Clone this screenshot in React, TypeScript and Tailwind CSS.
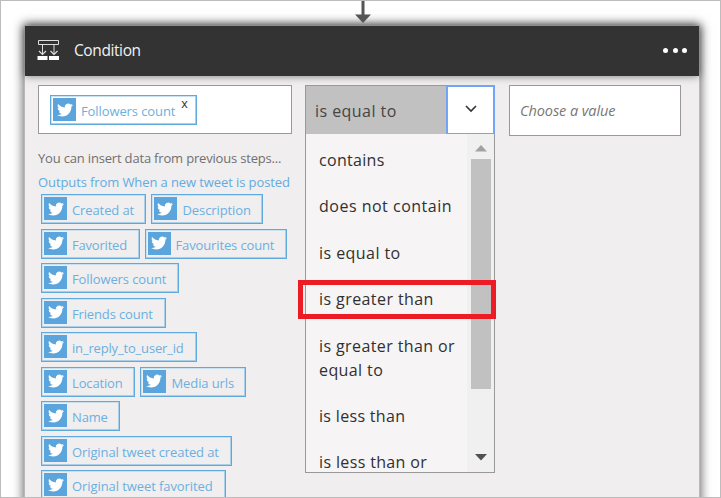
import type { ReactNode } from "react";

const BIRD =
  "M23.953 4.57a10 10 0 01-2.825.775 4.958 4.958 0 002.163-2.723c-.951.555-2.005.959-3.127 1.184a4.92 4.92 0 00-8.384 4.482C7.69 8.095 4.067 6.13 1.64 3.162a4.822 4.822 0 00-.666 2.475c0 1.71.87 3.213 2.188 4.096a4.904 4.904 0 01-2.228-.616v.06a4.923 4.923 0 003.946 4.827 4.996 4.996 0 01-2.212.085 4.936 4.936 0 004.604 3.417 9.867 9.867 0 01-6.102 2.105c-.39 0-.779-.023-1.17-.067a13.995 13.995 0 007.557 2.209c9.053 0 13.998-7.496 13.998-13.985 0-.21 0-.42-.015-.63A9.935 9.935 0 0024 4.59z";

function Chip({ width, label, track, children }: { width: string; label: string; track: string; children?: ReactNode }) {
  return (
    <div className={`flex h-[30px] shrink-0 items-start border border-[#5fa9dc] pl-[2px] pt-[2px] shadow-[inset_-1px_-1px_0_#a9d0eb,inset_1px_1px_0_#c9e1f1] ${width}`}>
      <span className="flex h-[23px] w-[23px] shrink-0 items-center justify-center bg-[#5ca5dc]">
        <svg viewBox="0 0 24 24" className="h-[16px] w-[16px]" fill="#fff"><path d={BIRD} /></svg>
      </span>
      <span className={`ml-[5px] mt-[3px] whitespace-nowrap text-[13px] leading-[20px] text-[#6cb0e1] ${track}`}>{label}</span>
      {children}
    </div>
  );
}

const rows = [
  [
    { label: "Created at", width: "w-[105px]", track: "tracking-[-0.1px]" },
    { label: "Description", width: "w-[112px]", track: "tracking-[-0.1px] pl-px" },
  ],
  [
    { label: "Favorited", width: "w-[99px]", track: "tracking-[-0.2px]" },
    { label: "Favourites count", width: "w-[142px]", track: "tracking-[-0.13px]" },
  ],
  [{ label: "Followers count", width: "w-[138px]", track: "tracking-[-0.1px]" }],
  [{ label: "Friends count", width: "w-[125px]", track: "tracking-[-0.15px]" }],
  [{ label: "in_reply_to_user_id", width: "w-[156px]", track: "tracking-[-0.17px]" }],
  [
    { label: "Location", width: "w-[94px]", track: "tracking-[-0.15px]" },
    { label: "Media urls", width: "w-[106px]", track: "tracking-[-0.1px] pl-px" },
  ],
  [{ label: "Name", width: "w-[79px]", track: "tracking-[-0.15px]" }],
  [{ label: "Original tweet created at", width: "w-[191px]", track: "tracking-[-0.1px]" }],
  [{ label: "Original tweet favorited", width: "w-[185px]", track: "tracking-[-0.08px]" }],
];

const options = [
  { label: "contains", track: "tracking-[0.3px]" },
  { label: "does not contain", track: "tracking-[0.5px]" },
  { label: "is equal to", track: "tracking-[0.44px]" },
  { label: "is greater than", track: "tracking-[0.42px]" },
  { label: "is greater than or equal to", track: "tracking-[0.4px]" },
  { label: "is less than", track: "tracking-[0.32px]" },
  { label: "is less than or", track: "tracking-[0.36px]" },
];

export default function App() {
  return (
    <div className="relative h-[498px] w-[721px] overflow-hidden border border-[#bdbdbd] bg-white pl-[23px] pt-[24px] font-['Open_Sans','Noto_Sans',sans-serif]">
      <svg className="absolute left-[352.500px] top-0" width="18" height="23" viewBox="0 0 18 23">
        <path d="M7.500 0h3v13.500H17L9 22 1 13.500h6.500z" fill="#555" />
      </svg>
      <main className="h-[500px] w-[676px] border-x border-t border-[#b8b8b8] bg-[#f0eeef] shadow-[0_0_10px_1px_rgba(0,0,0,0.6)]">
        <header className="flex h-[50px] items-center bg-[#333] pl-[12px] pr-[11px] shadow-[0_0_8px_rgba(0,0,0,0.5)]">
          <svg width="24" height="24" viewBox="0 0 24 24" fill="none" stroke="#ddd">
            <path d="M1.500 1.500h20v4h-20zM5.500 5.500v10M17 5.500v10" />
            <path d="M2 12l3.500 3.500L9 12M13.500 12l3.500 3.500L20.500 12" strokeWidth="1.200" />
            <path d="M.5 17h10v4H.5zM12 17h10v4H12z" fill="#fff" stroke="none" />
          </svg>
          <h1 className="-mt-[2px] ml-[13px] text-[15.500px] leading-[22px] tracking-[-0.4px] text-[#f1f1f1]">Condition</h1>
          <div className="-mt-[2px] ml-auto flex gap-[4.500px] pr-[1px]">
            <i className="h-[5px] w-[5px] rounded-full bg-white" />
            <i className="h-[5px] w-[5px] rounded-full bg-white" />
            <i className="h-[5px] w-[5px] rounded-full bg-white" />
          </div>
        </header>
        <div className="flex items-start pl-[13px] pt-[9px]">
          <section className="w-[254px] shrink-0">
            <div className="h-[49px] border border-[#999] bg-white pl-[11px] pt-[9px]">
              <Chip label="Followers count" width="w-[147px]" track="tracking-[-0.1px]">
                <span className="ml-[6px] mt-[-1px] text-[12.500px] leading-[13px] text-[#333]">x</span>
              </Chip>
            </div>
            <p className="mt-[14px] whitespace-nowrap text-[13px] leading-[20px] tracking-[-0.18px] text-[#707070]">You can insert data from previous steps...</p>
            <p className="mt-[4px] whitespace-nowrap text-[13px] leading-[20px] tracking-[-0.1px] text-[#64abdf]">Outputs from When a new tweet is posted</p>
            <div className="mt-[2px] flex flex-col gap-[4.500px] pl-[3px]">
              {rows.map((row, i) => (
                <div key={i} className="flex gap-[4.500px]">
                  {row.map((c) => <Chip key={c.label} {...c} />)}
                </div>
              ))}
            </div>
          </section>
          <section className="ml-[13px] flex h-[388px] w-[190px] shrink-0 flex-col border border-[#999]">
            <div className="flex h-[48px] shrink-0 bg-[#c1c1c1] pl-[9px]">
              <span className="mt-[13px] whitespace-nowrap text-[16px] leading-[24px] tracking-[0.45px] text-[#454545]">is equal to</span>
              <button className="-mr-px -mt-px ml-auto flex h-[50px] w-[49px] items-center justify-center rounded-[2px] border-2 border-[#72a5f8] bg-white">
                <svg width="14" height="10" viewBox="0 0 14 10" className="-mt-[2px]" fill="none" stroke="#333" strokeWidth="1.600"><path d="M2 2l5 5 5-5" /></svg>
              </button>
            </div>
            <div className="flex min-h-0 flex-1 bg-[#f6f4f5]">
              <ul className="flex-1 overflow-hidden pl-[13px] pt-[14px]">
                {options.map((o) => (
                  <li key={o.label} className={`mb-[22.400px] w-[147px] text-[16px] leading-[24px] text-[#303030] ${o.track}`}>{o.label}</li>
                ))}
              </ul>
              <div className="flex w-[27px] shrink-0 flex-col items-center bg-[#f0f0f0]">
                <svg width="12" height="7" viewBox="0 0 12 7" className="mt-[11px] shrink-0"><path d="M6 0l6 6.500H0z" fill="#a2a2a2" /></svg>
                <div className="mt-[7px] h-[230px] w-[20px] shrink-0 bg-[#c1c1c1]" />
                <svg width="12" height="7" viewBox="0 0 12 7" className="mb-[11px] mt-auto shrink-0"><path d="M6 6.500L0 0h12z" fill="#505050" /></svg>
              </div>
            </div>
          </section>
          <div className="ml-[14px] h-[51px] w-[172px] border border-[#999] bg-white pl-[10px] pt-[15px] text-[14.500px] italic leading-[20px] tracking-[-0.080px] text-[#777]">Choose a value</div>
        </div>
      </main>
      <div className="absolute left-[297px] top-[279px] h-[39px] w-[198px] border-[5px] border-[#ed1c24]" />
    </div>
  );
}
